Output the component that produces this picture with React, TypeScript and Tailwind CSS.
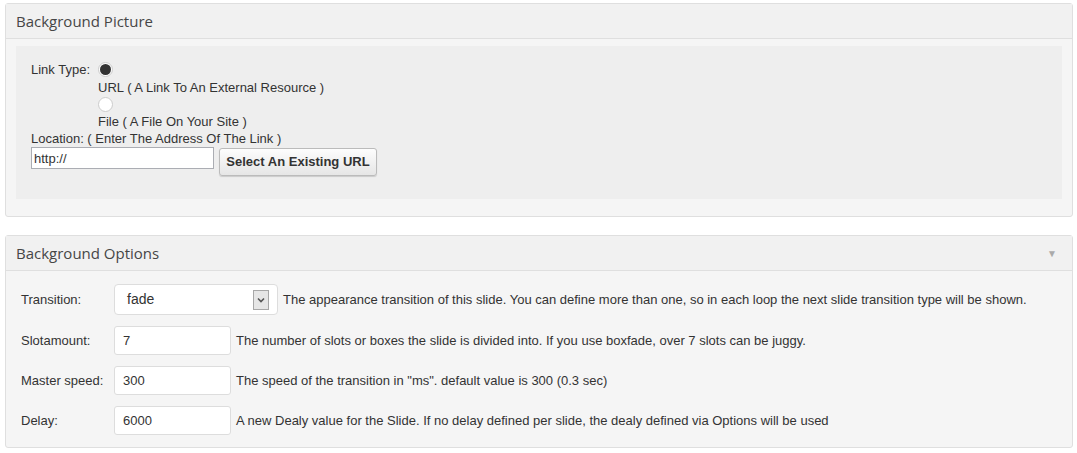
const sans = "font-['Liberation_Sans',Arial,sans-serif]";

const Panel = ({ title, arrow, children }: { title: string; arrow?: boolean; children: any }) => (
  <div className="mx-[5px] w-[1068px] rounded-[3px] border border-[#dfdfdf] bg-[#f5f5f5]">
    <div className="flex h-[35px] items-center justify-between border-b border-[#dfdfdf] bg-[#f1f1f1] pl-[10px] pr-[15px]">
      <h3 className="font-['Open_Sans',sans-serif] text-[15px] text-[#464646]">{title}</h3>
      {arrow && <span className="text-[10px] text-[#aaa]">▼</span>}
    </div>
    {children}
  </div>
);

const Radio = ({ checked }: { checked?: boolean }) => (
  <span className="flex h-[15px] w-[15px] items-center justify-center rounded-full border border-[#cccccc] bg-white">
    {checked && <span className="h-[11px] w-[11px] rounded-full bg-[#333]"></span>}
  </span>
);

const rows = [
  { label: "Slotamount:", value: "7", desc: "The number of slots or boxes the slide is divided into. If you use boxfade, over 7 slots can be juggy." },
  { label: "Master speed:", value: "300", desc: "The speed of the transition in \"ms\". default value is 300 (0.3 sec)" },
  { label: "Delay:", value: "6000", desc: "A new Dealy value for the Slide. If no delay defined per slide, the dealy defined via Options will be used" },
];

export default function App() {
  return (
    <div className={`bg-white pt-[3px] text-[13px] text-[#333] ${sans}`}>
      <Panel title="Background Picture">
        <div className="px-[10px] pb-[17px] pt-[7px]">
          <div className="h-[153px] bg-[#eeeeee] pl-[15px] pt-[16px]">
            <div className="flex">
              <span className="w-[67px] leading-[15px]">Link Type:</span>
              <div className="flex flex-col">
                <Radio checked />
                <span className="mt-[3px] leading-[15px]">URL ( A Link To An External Resource )</span>
                <span className="mt-[2px]"><Radio /></span>
                <span className="mt-[2px] leading-[15px]">File ( A File On Your Site )</span>
              </div>
            </div>
            <div className="mt-[2px] leading-[15px]">Location: ( Enter The Address Of The Link )</div>
            <div className="mt-[1px] flex items-start gap-[5px]">
              <div className="flex h-[22px] w-[183px] items-center border border-[#abadb3] bg-white px-[2px] leading-none">http://</div>
              <button className="mt-[1px] h-[28px] w-[158px] rounded-[3px] border border-[#bbb] bg-gradient-to-b from-[#fdfdfd] to-[#e6e6e6] text-[13px] font-bold text-[#333] shadow-[0_1px_1px_rgba(0,0,0,0.15)]">
                Select An Existing URL
              </button>
            </div>
          </div>
        </div>
      </Panel>

      <div className="h-[18px]"></div>

      <Panel title="Background Options" arrow>
        <div className="px-[15px] pb-[12px] pt-[13px]">
          <div className="flex h-[31px] items-center">
            <span className="w-[93px]">Transition:</span>
            <div className="flex h-[31px] w-[164px] items-center justify-between rounded-[4px] border border-[#dddddd] bg-white pl-[12px] pr-[8px]">
              <span className="text-[14px]">fade</span>
              <span className="flex h-[20px] w-[16px] items-center justify-center border border-[#a7a7a7] bg-[#e6e6e6]">
                <svg width="8" height="6" viewBox="0 0 8 6"><path d="M1 1.5 L4 4.5 L7 1.5" stroke="#555" strokeWidth="1.6" fill="none" /></svg>
              </span>
            </div>
            <span className="ml-[5px]">The appearance transition of this slide. You can define more than one, so in each loop the next slide transition type will be shown.</span>
          </div>
          {rows.map((r) => (
            <div key={r.label} className="mt-[11px] flex h-[29px] items-center">
              <span className="w-[93px]">{r.label}</span>
              <div className="flex h-[29px] w-[117px] items-center rounded-[3px] border border-[#dddddd] bg-white pl-[8px]">{r.value}</div>
              <span className="ml-[5px]">{r.desc}</span>
            </div>
          ))}
        </div>
      </Panel>
    </div>
  );
}
